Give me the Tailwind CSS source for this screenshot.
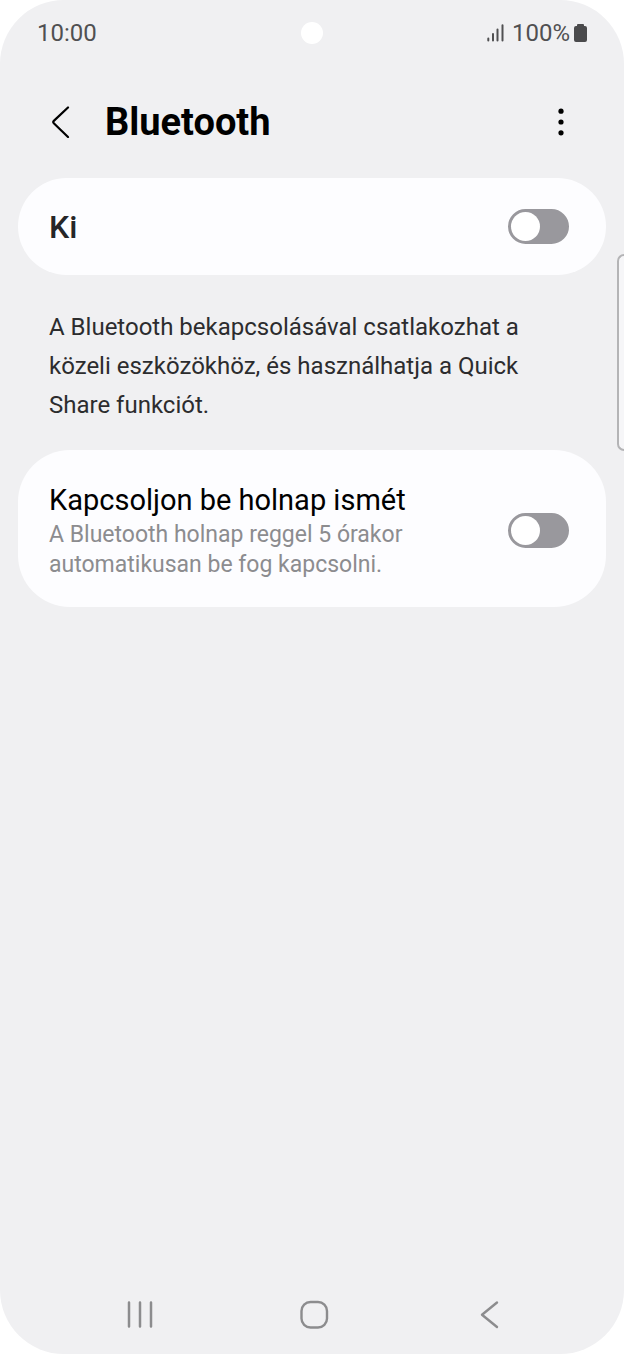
<!DOCTYPE html>
<html lang="hu">
<head>
  <meta charset="UTF-8" />
  <meta name="viewport" content="width=device-width, initial-scale=1.0"/>
  <title>Bluetooth</title>
  <script src="https://cdn.jsdelivr.net/npm/@tailwindcss/browser@4"></script>
</head>
<body class="bg-white font-['Roboto',sans-serif]">
  <div class="relative flex min-h-screen flex-col overflow-hidden rounded-[64px] bg-[#f0f0f2]">

    <!-- Status bar -->
    <div class="grid h-[66px] grid-cols-3 items-center px-[37px] text-2xl text-[#505052]">
      <span>10:00</span>
      <span class="size-[22px] justify-self-center rounded-full bg-white"></span>
      <div class="flex items-center justify-end gap-1">
        <svg class="mr-1 h-[18px] w-[17px]" viewBox="0 0 17 18" fill="none" stroke="#505052" stroke-width="2" stroke-linecap="round" aria-hidden="true">
          <path d="M1.3 14.5V16.5M6 10V16.5M10.5 5.5V16.5M15.5 1.2V16.5"/>
        </svg>
        <span>100%</span>
        <svg class="h-[18px] w-[13px]" viewBox="0 0 13 18" fill="#4a4a4c" aria-hidden="true">
          <path d="M4 0h5q1 0 1 1v1h1q2 0 2 2v12q0 2-2 2H2q-2 0-2-2V4q0-2 2-2h1V1q0-1 1-1z"/>
        </svg>
      </div>
    </div>

    <!-- Header -->
    <header class="flex h-28 items-center px-[47px]">
      <button type="button" aria-label="Vissza" class="flex h-10 w-6 items-center justify-center">
        <svg class="h-8 w-6" viewBox="0 0 24 32" fill="none" stroke="#000" stroke-width="2.2" stroke-linecap="round" stroke-linejoin="round">
          <path d="M21 1.500L6.800 14.900Q5.600 16 6.800 17.200L21 31"/>
        </svg>
      </button>
      <h1 class="ml-[34px] flex-1 text-[38px] leading-10 font-bold text-black">Bluetooth</h1>
      <button type="button" aria-label="További lehetőségek" class="flex h-10 w-8 items-center justify-center">
        <svg class="h-7 w-2" viewBox="0 0 8 28" fill="#000">
          <circle cx="4" cy="3.2" r="2.6"/>
          <circle cx="4" cy="14" r="2.6"/>
          <circle cx="4" cy="24.8" r="2.6"/>
        </svg>
      </button>
    </header>

    <!-- Settings -->
    <main class="flex-1 px-[18px]">
      <label class="flex h-[97px] items-center justify-between rounded-full bg-[#fdfdff] pr-[37px] pl-[31px]">
        <span class="text-[32px] leading-10 font-medium text-[#262628]">Ki</span>
        <input type="checkbox" class="h-[35px] w-[61px] shrink-0 appearance-none rounded-full border-3 border-[#99989d] bg-[#99989d] before:block before:size-[29px] before:rounded-full before:bg-white checked:border-[#3e7bfa] checked:bg-[#3e7bfa] checked:before:ml-auto" />
      </label>

      <p class="mt-[33px] px-[31px] text-2xl leading-[39px] text-[#2c2c2e]">
        A Bluetooth bekapcsolásával csatlakozhat a<br/>
        közeli eszközökhöz, és használhatja a Quick<br/>
        Share funkciót.
      </p>

      <label class="mt-[25px] flex items-center justify-between rounded-[52px] bg-[#fdfdff] pt-[30px] pr-[37px] pb-[27px] pl-[31px]">
        <span>
          <span class="block text-[29px] leading-10 text-black">Kapcsoljon be holnap ismét</span>
          <span class="block text-[23px] leading-[30px] text-[#8c8c8f]">A Bluetooth holnap reggel 5 órakor<br/>automatikusan be fog kapcsolni.</span>
        </span>
        <input type="checkbox" class="h-[35px] w-[61px] shrink-0 appearance-none rounded-full border-3 border-[#99989d] bg-[#99989d] before:block before:size-[29px] before:rounded-full before:bg-white checked:border-[#3e7bfa] checked:bg-[#3e7bfa] checked:before:ml-auto" />
      </label>
    </main>

    <!-- Edge panel handle -->
    <div class="absolute top-[254px] right-0 h-[197px] w-[7px] rounded-l-lg border-2 border-r-0 border-[#b4b4b6] bg-[#f6f6f8]"></div>

    <!-- Navigation bar -->
    <nav class="grid h-20 grid-cols-[1fr_auto_1fr] items-center px-[122px] text-[#8c8c8e]">
      <button type="button" aria-label="Legutóbbiak" class="size-9">
        <svg class="size-9" viewBox="0 0 36 36" fill="none" stroke="currentColor" stroke-width="2.5" stroke-linecap="round">
          <path d="M7 6.500V30.500M18 6.500V30.500M29 6.500V30.500"/>
        </svg>
      </button>
      <button type="button" aria-label="Kezdőképernyő" class="size-9">
        <svg class="size-9" viewBox="0 0 36 36" fill="none" stroke="currentColor" stroke-width="2.4">
          <rect x="7.5" y="6" width="25.5" height="25.5" rx="9"/>
        </svg>
      </button>
      <button type="button" aria-label="Vissza" class="size-9 justify-self-end">
        <svg class="size-9" viewBox="0 0 36 36" fill="none" stroke="currentColor" stroke-width="2.4" stroke-linecap="round" stroke-linejoin="round">
          <path d="M31 6.500L16 18.700L31 31"/>
        </svg>
      </button>
    </nav>
  </div>
</body>
</html>
